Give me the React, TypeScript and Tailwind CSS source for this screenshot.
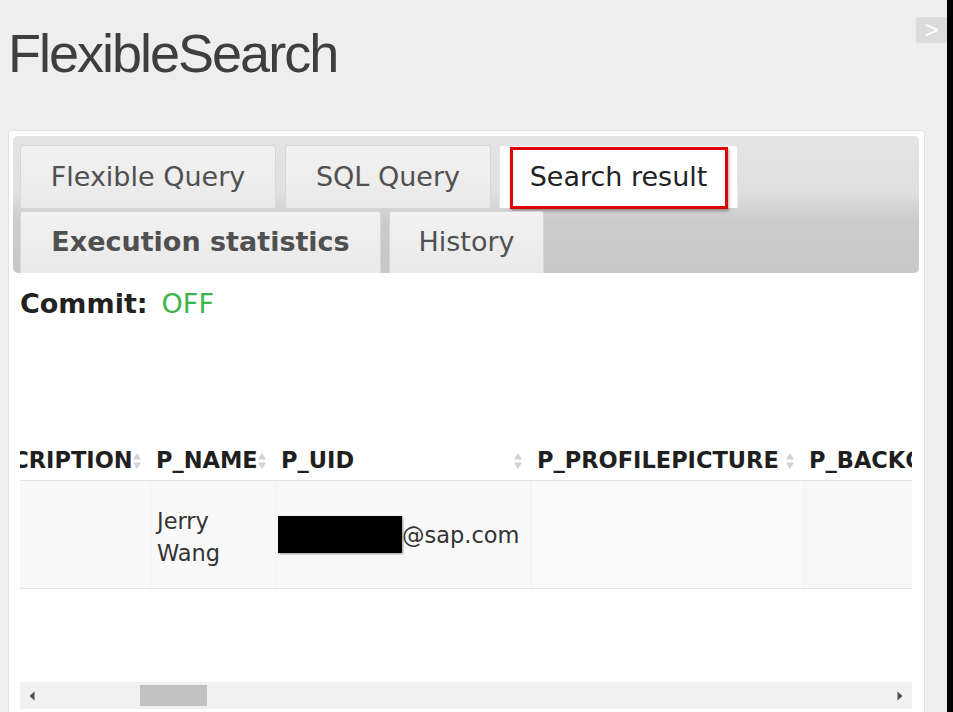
const cols = [
  { label: "DESCRIPTION", w: "w-[194px]" },
  { label: "P_NAME", w: "w-[125px]" },
  { label: "P_UID", w: "w-[256px]" },
  { label: "P_PROFILEPICTURE", w: "w-[272px]" },
  { label: "P_BACKGROUNDPICTURE", w: "w-[260px]" },
];

function SortIcon() {
  return (
    <svg
      width="10"
      height="20"
      viewBox="0 0 10 20"
      className="absolute right-[8px] top-1/2 -translate-y-1/2"
    >
      <path d="M5 2 L9 8.5 H1 Z" fill="#d2d2d2" />
      <path d="M5 18 L9 11.5 H1 Z" fill="#d2d2d2" />
    </svg>
  );
}

function Tab({
  label,
  w,
  h,
  active,
  bold,
}: {
  label: string;
  w: string;
  h: string;
  active?: boolean;
  bold?: boolean;
}) {
  return (
    <div
      className={`relative flex ${w} ${h} items-center justify-center rounded-t-[3px] border border-b-0 text-[27px] ${
        active
          ? "border-[#e6e6e6] bg-white text-[#222222]"
          : "border-[#d6d6d6] bg-gradient-to-b from-[#f2f2f2] to-[#e9e9e9] text-[#505050]"
      } ${bold ? "font-bold" : ""}`}
    >
      {label}
      {active && (
        <div className="absolute left-[10px] top-[1px] h-[62px] w-[218px] border-[3px] border-[#e00000] shadow-[1px_2px_3px_rgba(0,0,0,0.35)]" />
      )}
    </div>
  );
}

function TabBar() {
  return (
    <div className="flex h-[137px] flex-col gap-[3px] rounded-[5px] bg-[linear-gradient(180deg,#e4e4e4_0%,#e0e0e0_40%,#cbcbcb_62%,#c8c8c8_100%)] pl-[7px] pt-[9px]">
      <div className="flex h-[63px] items-end">
        <Tab label="Flexible Query" w="w-[256px]" h="h-[63px]" />
        <div className="w-[9px]" />
        <Tab label="SQL Query" w="w-[206px]" h="h-[63px]" />
        <div className="w-[8px]" />
        <Tab label="Search result" w="w-[239px]" h="h-[63px]" active />
      </div>
      <div className="flex h-[62px]">
        <Tab label="Execution statistics" w="w-[361px]" h="h-[62px]" bold />
        <div className="w-[8px]" />
        <Tab label="History" w="w-[155px]" h="h-[62px]" />
      </div>
    </div>
  );
}

function ResultTable() {
  return (
    <div className="mt-[119px] flex w-[892px] flex-col">
      <div className="overflow-hidden">
        <div className="ml-[-64px] flex flex-col">
          <div className="flex h-[40px] border-b border-[#e4e4e4]">
            {cols.map((c) => (
              <div
                key={c.label}
                className={`relative flex ${c.w} shrink-0 items-center overflow-hidden whitespace-nowrap pl-[6px] text-[22.5px] font-bold text-[#1f1f1f]`}
              >
                <SortIcon />
                <span className="relative">{c.label}</span>
              </div>
            ))}
          </div>
          <div className="flex h-[108px] border-b border-[#e2e2e2] bg-[#f9f9f9] text-[22.5px] leading-[32px] text-[#333333]">
            <div className="w-[194px] shrink-0" />
            <div className="flex w-[125px] shrink-0 items-center border-l border-[#f1f1f1] pl-[6px] pt-[4px]">
              <span>
                Jerry
                <br />
                Wang
              </span>
            </div>
            <div className="flex w-[256px] shrink-0 items-center border-l border-[#f1f1f1] pl-[2px]">
              <div className="h-[37px] w-[124px] bg-black shadow-[1px_1px_2px_rgba(0,0,0,0.4)]" />
              <span>@sap.com</span>
            </div>
            <div className="w-[272px] shrink-0 border-l border-[#f1f1f1] bg-[#fafafa]" />
            <div className="w-[260px] shrink-0 border-l border-[#f1f1f1] bg-[#f7f7f7]" />
          </div>
        </div>
      </div>
      <div className="h-[93px]" />
      <div className="flex h-[27px] items-center bg-[#f1f1f1]">
        <div className="flex h-full w-[24px] items-center justify-center">
          <svg width="6" height="10" viewBox="0 0 6 10">
            <path d="M5.5 0.5 L0.5 5 L5.5 9.5 Z" fill="#505050" />
          </svg>
        </div>
        <div className="flex h-full flex-1 items-center">
          <div className="ml-[96px] h-[21px] w-[67px] bg-[#c1c1c1]" />
        </div>
        <div className="flex h-full w-[24px] items-center justify-center">
          <svg width="6" height="10" viewBox="0 0 6 10">
            <path d="M0.5 0.5 L5.5 5 L0.5 9.5 Z" fill="#505050" />
          </svg>
        </div>
      </div>
    </div>
  );
}

export default function App() {
  return (
    <div className="flex h-[712px] w-[953px] overflow-hidden bg-[#eeeeee] font-['DejaVu_Sans',Verdana,sans-serif]">
      <div className="relative flex flex-1 flex-col">
        <h1 className="pl-[8px] pt-[26px] font-['Liberation_Sans',Arial,sans-serif] text-[54px] font-normal leading-none tracking-[-2px] text-[#3e3e3e]">
          FlexibleSearch
        </h1>
        <button className="absolute right-0 top-[17px] flex h-[26px] w-[31px] items-center justify-center rounded-[2px] bg-[#dcdcdc] font-['Liberation_Sans',Arial,sans-serif] text-[24px] leading-none text-white">
          &gt;
        </button>
        <div className="ml-[8px] mt-[50px] flex w-[917px] flex-1 flex-col rounded-t-[4px] border border-b-0 border-[#e2e2e2] bg-white pl-[4px] pr-[5px] pt-[5px]">
          <TabBar />
          <div className="pl-[7px]">
            <div className="mt-[13px] text-[27px] leading-[36px]">
              <span className="font-bold text-[#222222]">Commit:</span>
              <span className="ml-[14px] text-[#3bb54a]">OFF</span>
            </div>
            <ResultTable />
          </div>
        </div>
      </div>
      <div className="w-[6px] bg-black" />
    </div>
  );
}
